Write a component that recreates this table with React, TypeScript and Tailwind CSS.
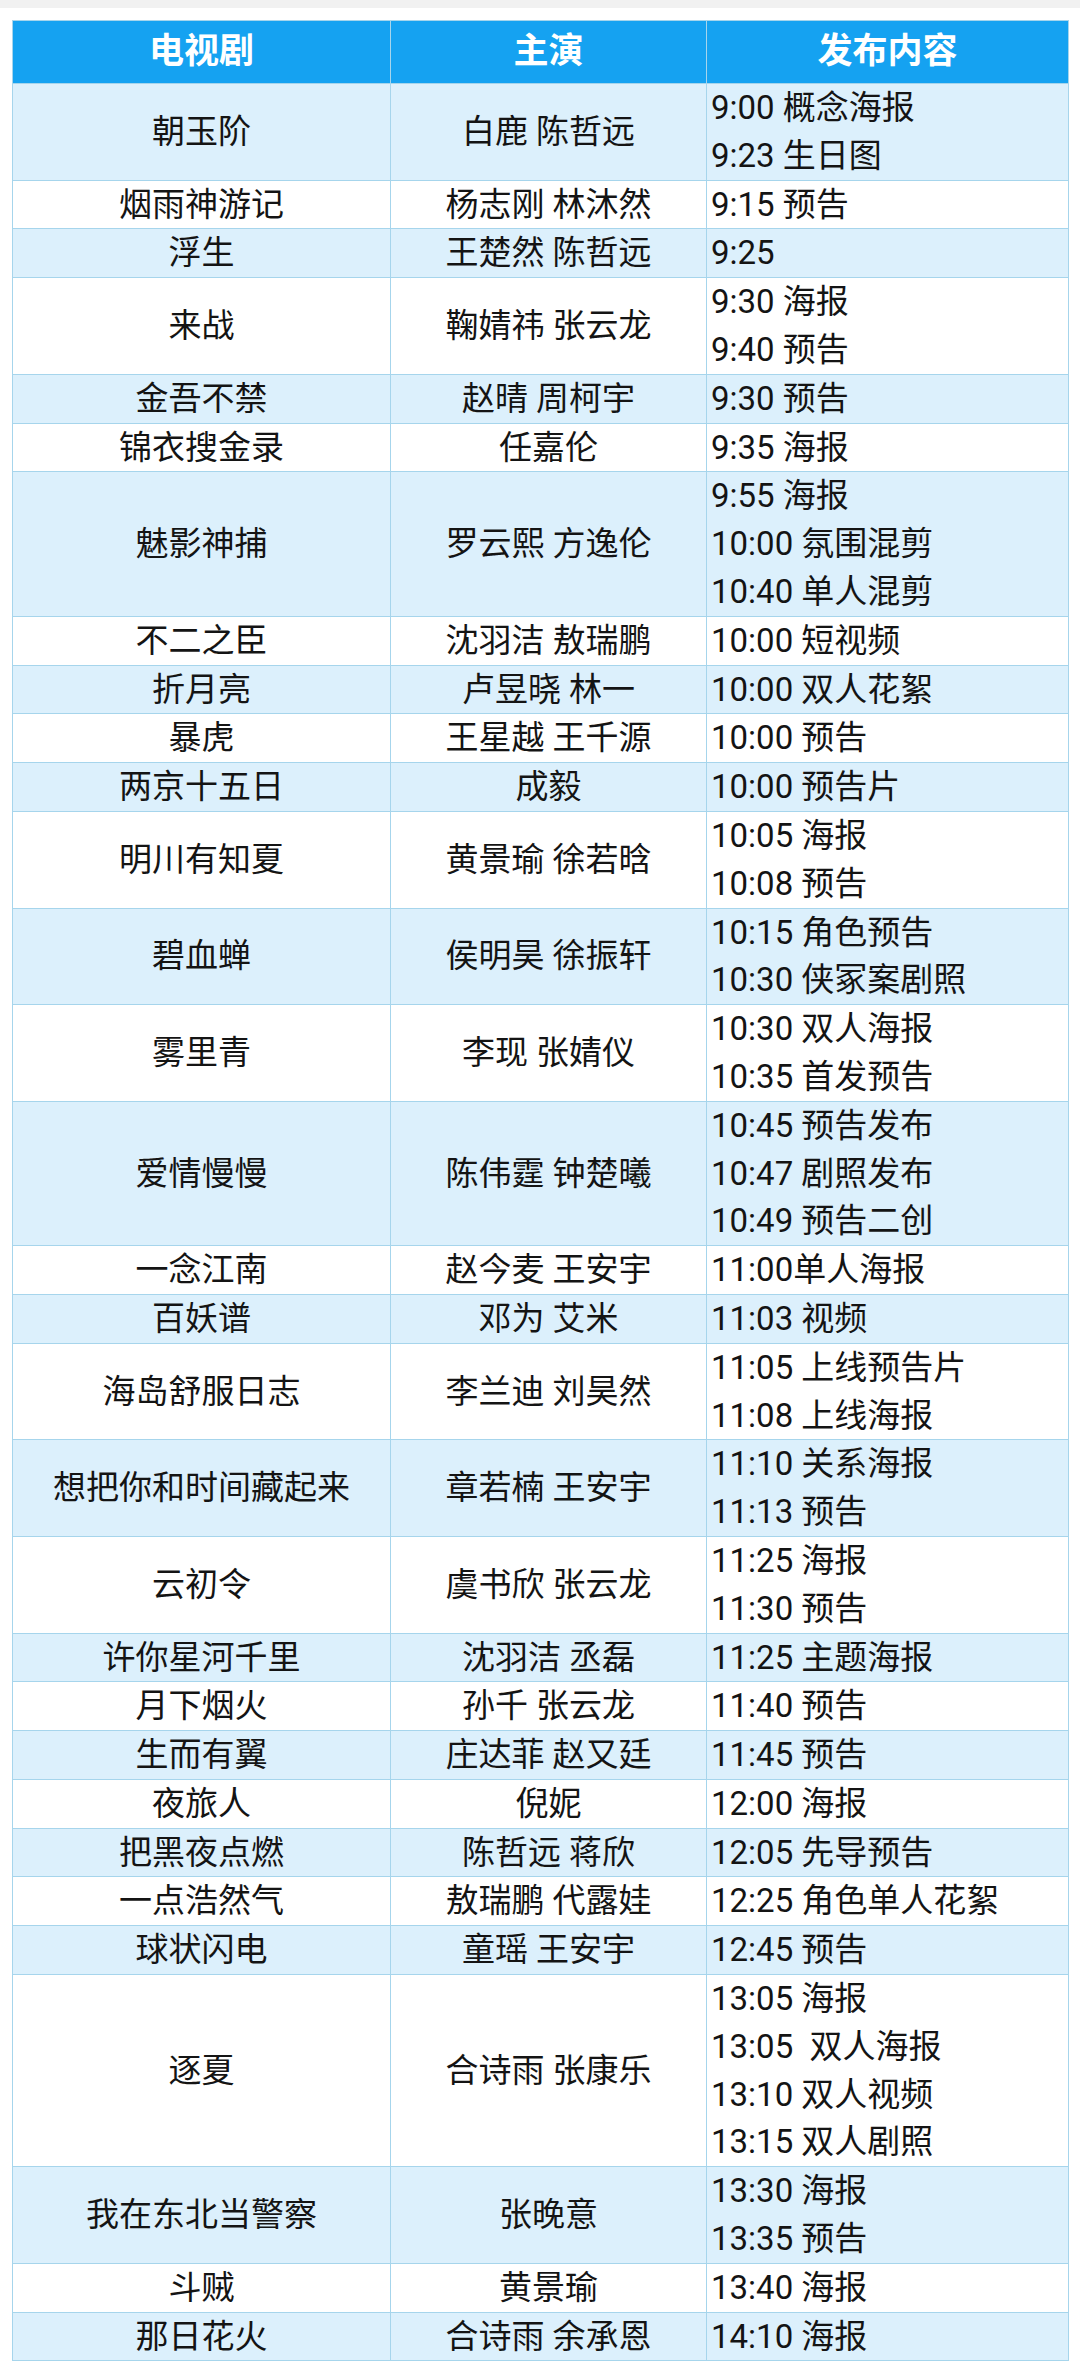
import React from 'react';

type Row = { show: string; cast: string; items: string[] };

const rows: Row[] = [
    { show: '朝玉阶', cast: '白鹿 陈哲远', items: ['9:00 概念海报', '9:23 生日图'] },
    { show: '烟雨神游记', cast: '杨志刚 林沐然', items: ['9:15 预告'] },
    { show: '浮生', cast: '王楚然 陈哲远', items: ['9:25'] },
    { show: '来战', cast: '鞠婧祎 张云龙', items: ['9:30 海报', '9:40 预告'] },
    { show: '金吾不禁', cast: '赵晴 周柯宇', items: ['9:30 预告'] },
    { show: '锦衣搜金录', cast: '任嘉伦', items: ['9:35 海报'] },
    { show: '魅影神捕', cast: '罗云熙 方逸伦', items: ['9:55 海报', '10:00 氛围混剪', '10:40 单人混剪'] },
    { show: '不二之臣', cast: '沈羽洁 敖瑞鹏', items: ['10:00 短视频'] },
    { show: '折月亮', cast: '卢昱晓 林一', items: ['10:00 双人花絮'] },
    { show: '暴虎', cast: '王星越 王千源', items: ['10:00 预告'] },
    { show: '两京十五日', cast: '成毅', items: ['10:00 预告片'] },
    { show: '明川有知夏', cast: '黄景瑜 徐若晗', items: ['10:05 海报', '10:08 预告'] },
    { show: '碧血蝉', cast: '侯明昊 徐振轩', items: ['10:15 角色预告', '10:30 侠冢案剧照'] },
    { show: '雾里青', cast: '李现 张婧仪', items: ['10:30 双人海报', '10:35 首发预告'] },
    { show: '爱情慢慢', cast: '陈伟霆 钟楚曦', items: ['10:45 预告发布', '10:47 剧照发布', '10:49 预告二创'] },
    { show: '一念江南', cast: '赵今麦 王安宇', items: ['11:00单人海报'] },
    { show: '百妖谱', cast: '邓为 艾米', items: ['11:03 视频'] },
    { show: '海岛舒服日志', cast: '李兰迪 刘昊然', items: ['11:05 上线预告片', '11:08 上线海报'] },
    { show: '想把你和时间藏起来', cast: '章若楠 王安宇', items: ['11:10 关系海报', '11:13 预告'] },
    { show: '云初令', cast: '虞书欣 张云龙', items: ['11:25 海报', '11:30 预告'] },
    { show: '许你星河千里', cast: '沈羽洁 丞磊', items: ['11:25 主题海报'] },
    { show: '月下烟火', cast: '孙千 张云龙', items: ['11:40 预告'] },
    { show: '生而有翼', cast: '庄达菲 赵又廷', items: ['11:45 预告'] },
    { show: '夜旅人', cast: '倪妮', items: ['12:00 海报'] },
    { show: '把黑夜点燃', cast: '陈哲远 蒋欣', items: ['12:05 先导预告'] },
    { show: '一点浩然气', cast: '敖瑞鹏 代露娃', items: ['12:25 角色单人花絮'] },
    { show: '球状闪电', cast: '童瑶 王安宇', items: ['12:45 预告'] },
    { show: '逐夏', cast: '合诗雨 张康乐', items: ['13:05 海报', '13:05  双人海报', '13:10 双人视频', '13:15 双人剧照'] },
    { show: '我在东北当警察', cast: '张晚意', items: ['13:30 海报', '13:35 预告'] },
    { show: '斗贼', cast: '黄景瑜', items: ['13:40 海报'] },
    { show: '那日花火', cast: '合诗雨 余承恩', items: ['14:10 海报'] },
];

const cell = 'border border-[#a6d5ec] align-middle';

export default function App() {
    return (
        <div className="w-[1080px] min-h-[2368px] bg-white font-['Roboto','Noto_Sans_CJK_SC',sans-serif] text-[#141414]">
            <div className="h-2 bg-[#f1f1f1]" />
            <div className="px-3 pt-3">
                <table className="w-[1056px] table-fixed border-collapse">
                    <colgroup>
                        <col className="w-[378px]" />
                        <col className="w-[316px]" />
                        <col className="w-[362px]" />
                    </colgroup>
                    <thead>
                        <tr className="h-[63px] bg-[#15a2f1] text-white">
                            <th className={`${cell} text-[35px] font-bold`}>电视剧</th>
                            <th className={`${cell} text-[35px] font-bold`}>主演</th>
                            <th className={`${cell} text-[35px] font-bold`}>发布内容</th>
                        </tr>
                    </thead>
                    <tbody className="text-[33px] leading-[47.8px]">
                        {rows.map((r, i) => (
                            <tr key={i} className={i % 2 === 0 ? 'bg-[#dcf0fc]' : 'bg-white'}>
                                <td className={`${cell} text-center`}>{r.show}</td>
                                <td className={`${cell} text-center`}>{r.cast}</td>
                                <td className={`${cell} pl-1`}>
                                    {r.items.map((t, j) => (
                                        <div key={j} className="whitespace-pre">{t}</div>
                                    ))}
                                </td>
                            </tr>
                        ))}
                    </tbody>
                </table>
            </div>
        </div>
    );
}
